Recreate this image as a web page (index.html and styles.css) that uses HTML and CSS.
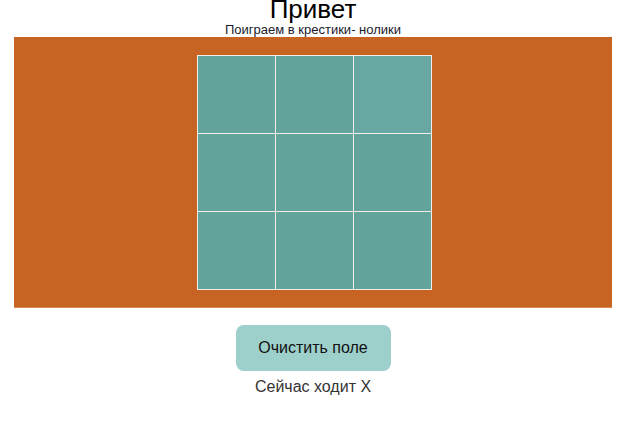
FILE: index.html
```html
<!DOCTYPE html>
<html lang="ru">
<head>
<meta charset="utf-8">
<title>Крестики-нолики</title>
<link rel="stylesheet" href="styles.css">
</head>
<body>
<header class="head">
  <h1 class="title">Привет</h1>
  <p class="subtitle">Поиграем в крестики- нолики</p>
</header>
<main class="field">
  <div class="board">
    <div class="cell"></div>
    <div class="cell"></div>
    <div class="cell cell-hover"></div>
    <div class="cell"></div>
    <div class="cell"></div>
    <div class="cell"></div>
    <div class="cell"></div>
    <div class="cell"></div>
    <div class="cell"></div>
  </div>
</main>
<section class="controls">
  <button class="clear">Очистить поле</button>
  <p class="turn">Сейчас ходит X</p>
</section>
</body>
</html>
```
FILE: styles.css
```css
html, body {
  margin: 0;
  padding: 0;
  background: #fff;
  font-family: "Liberation Sans", Arial, sans-serif;
}
.head {
  width: 598px;
  margin-left: 14px;
  text-align: center;
  color: #000;
}
.title {
  margin: -5px 0 0 0;
  font-size: 26px;
  font-weight: normal;
  line-height: 29px;
}
.subtitle {
  margin: -2px 0 0 0;
  font-size: 13px;
  line-height: 15px;
  color: #1a1a2a;
}
.field {
  width: 596px;
  margin: 0 0 0 14px;
  background: #c86423;
  padding: 18px 0 17px 2px;
  display: flex;
  justify-content: center;
  border-bottom: 1px solid #d98a5a;
}
.board {
  display: grid;
  grid-template-columns: repeat(3, 77px);
  grid-template-rows: repeat(3, 77px);
  gap: 1px;
  padding: 1px;
  background: #f4efe9;
}
.cell {
  background: #62a39c;
}
.cell-hover {
  background: #69a8a2;
}
.controls {
  width: 598px;
  margin-left: 14px;
  display: flex;
  flex-direction: column;
  align-items: center;
  padding-top: 17px;
}
.clear {
  width: 155px;
  height: 46px;
  border: none;
  border-radius: 8px;
  background: #9ed0cb;
  font-family: "Liberation Sans", Arial, sans-serif;
  font-size: 16px;
  color: #111;
  padding: 0;
}
.turn {
  margin: 7px 0 0 0;
  font-size: 16px;
  line-height: 18px;
  color: #333;
}
```
